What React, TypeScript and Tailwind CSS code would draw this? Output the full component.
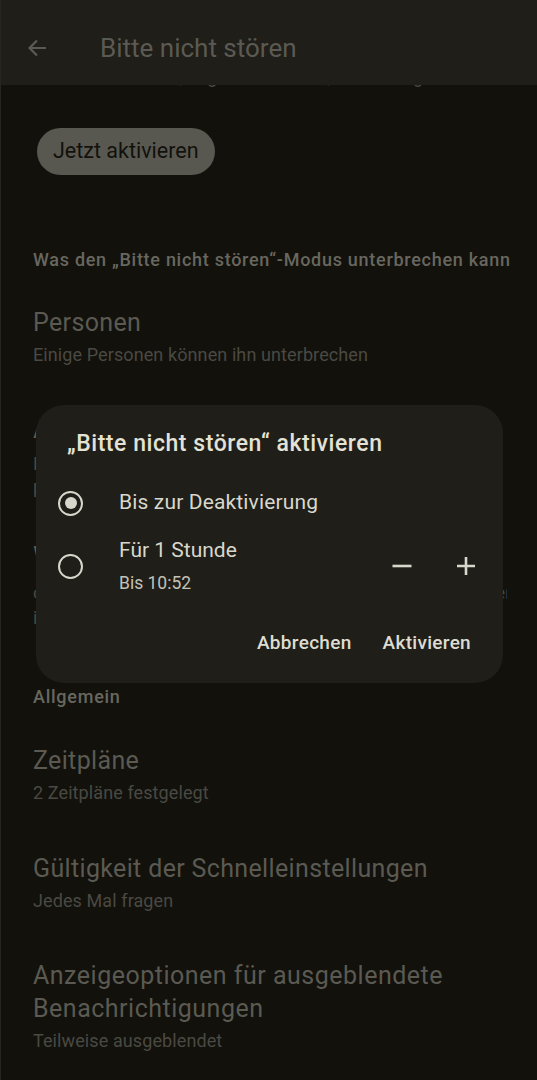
import React from "react";

const font = { fontFamily: "Roboto, 'Noto Sans', sans-serif" };

function Title({ children }: { children: React.ReactNode }) {
  return <div className="text-[25px] leading-[32px] text-[#5b5a52] tracking-[0.35px]">{children}</div>;
}
function Sub({ children }: { children: React.ReactNode }) {
  return <div className="mt-[4px] text-[18px] leading-[24px] text-[#4a4942] tracking-[0.1px]">{children}</div>;
}

export default function App() {
  return (
    <div style={font} className="relative w-[537px] h-[1080px] overflow-hidden bg-[#12110c] border-l border-[#26251f]">
      <div className="relative z-10 h-[85px] bg-[#1f1e19] flex items-center pt-[11px]">
        <svg className="ml-[24px]" width="24" height="24" viewBox="0 0 24 24" fill="none" stroke="#5b5a52" strokeWidth="2.2">
          <path d="M21 12H4.5M12 4.5 4.5 12l7.5 7.5" />
        </svg>
        <div className="ml-[51px] text-[26px] text-[#5b5a52]">Bitte nicht stören</div>
      </div>
      <div className="relative">
        <div className="-mt-[20px] px-[32px] text-[18px] leading-[24px] text-[#4a4942] whitespace-nowrap overflow-hidden">
          Zur Ruhe kommen, ungestört bleiben, nur wichtige Benachrichtigungen (
        </div>
        <div className="px-[36px] mt-[39px]">
          <div className="inline-flex items-center h-[47px] px-[16px] rounded-full bg-[#585851] text-[#12110c] text-[21.5px]">
            Jetzt aktivieren
          </div>
        </div>
        <div className="px-[32px] mt-[73px] text-[18px] font-medium leading-[24px] text-[#68675f] whitespace-nowrap tracking-[0.72px]">
          Was den „Bitte nicht stören“-Modus unterbrechen kann
        </div>

        <div className="mt-[11px] px-[32px] pt-[24px] pb-[23px]">
          <Title>Personen</Title>
          <Sub>Einige Personen können ihn unterbrechen</Sub>
        </div>
        <div className="px-[32px] pt-[24px] pb-[13px]">
          <Title>Apps</Title>
          <div className="mt-[4px] text-[18px] leading-[27px] text-[#4a4942]">
            Kalender, Uhr und 3 weitere Apps dürfen
            <br />
            können ihn unterbrechen
          </div>
        </div>
        <div className="pl-[32px] pr-[30px] pt-[24px]">
          <Title>Wecker &amp; andere Unterbrechungen</Title>
          <div className="mt-[7px] text-[18px] leading-[25px] text-[#4a4942]">
            <div className="whitespace-nowrap overflow-hidden">clocks, Medien, Berührungstöne, Erinnerungen und Terminen</div>
            <div>ihn unterbrechen</div>
          </div>
        </div>

        <div className="px-[32px] mt-[55px] text-[18px] font-medium leading-[24px] text-[#68675f] tracking-[0.75px]">Allgemein</div>

        <div className="mt-[12px] px-[32px] pt-[24px] pb-[23px]">
          <Title>Zeitpläne</Title>
          <Sub>2 Zeitpläne festgelegt</Sub>
        </div>
        <div className="px-[32px] pt-[25px] pb-[22px]">
          <Title>Gültigkeit der Schnelleinstellungen</Title>
          <Sub>Jedes Mal fragen</Sub>
        </div>
        <div className="px-[32px] pt-[24px] pb-[23px]">
          <div className="text-[25px] leading-[33px] text-[#5b5a52] tracking-[0.5px]">
            Anzeigeoptionen für ausgeblendete
            <br />
            Benachrichtigungen
          </div>
          <Sub>Teilweise ausgeblendet</Sub>
        </div>
      </div>

      <div className="absolute z-20 left-[35px] top-[405px] w-[467px] h-[278px] rounded-[28px] bg-[#1f1e19] px-[31px] pt-[24px]">
        <div className="text-[23px] font-medium leading-[30px] text-[#e4e2d7] tracking-[0.55px]">„Bitte nicht stören“ aktivieren</div>
        <div className="mt-[20px] flex items-center h-[48px]">
          <div className="w-[25px] h-[25px] rounded-full border-[2.5px] border-[#d9d7cc] flex items-center justify-center -ml-[9px]">
            <div className="w-[12px] h-[12px] rounded-full bg-[#d9d7cc]" />
          </div>
          <div className="ml-[36px] text-[21px] text-[#d9d7cc] tracking-[0.15px]">Bis zur Deaktivierung</div>
        </div>
        <div className="mt-[11px] flex items-center">
          <div className="w-[25px] h-[25px] rounded-full border-[2.5px] border-[#d9d7cc] -ml-[9px]" />
          <div className="ml-[36px] flex-1">
            <div className="text-[21px] leading-[24px] text-[#d9d7cc]">Für 1 Stunde</div>
            <div className="mt-[10px] text-[17.5px] leading-[22px] text-[#c4c2b7]">Bis 10:52</div>
          </div>
          <svg width="24" height="24" viewBox="0 0 24 24" className="mr-[40px]" stroke="#d9d7cc" strokeWidth="2.6">
            <path d="M2.5 12h19" />
          </svg>
          <svg width="24" height="24" viewBox="0 0 24 24" className="mr-[-6px]" stroke="#d9d7cc" strokeWidth="2.6">
            <path d="M3 12h18M12 3v18" />
          </svg>
        </div>
        <div className="mt-[36px] flex justify-end gap-[31px] pr-[1px] text-[19px] font-medium leading-[26px] text-[#dedcd1] tracking-[0.3px]">
          <span>Abbrechen</span>
          <span>Aktivieren</span>
        </div>
      </div>
    </div>
  );
}
